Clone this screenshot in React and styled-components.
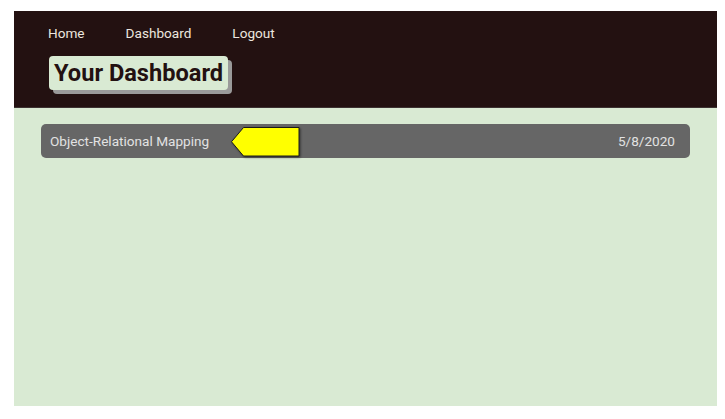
import styled, { createGlobalStyle } from "styled-components";

const GlobalStyle = createGlobalStyle`
  html, body {
    margin: 0;
    padding: 0;
    background: #ffffff;
    font-family: Roboto, "Liberation Sans", sans-serif;
  }
`;

const Page = styled.div`
  margin: 11px 8px 0 14px;
  height: 395px;
  background-color: #d9ead3;
  display: flex;
  flex-direction: column;
`;

const Header = styled.header`
  background-color: #231111;
  height: 97px;
  box-sizing: border-box;
  padding: 14px 0 0 34px;
  border-bottom: 1px solid #3d3232;
  display: flex;
  flex-direction: column;
  align-items: flex-start;
`;

const Nav = styled.nav`
  display: flex;
  gap: 41px;
`;

const NavLink = styled.a`
  color: #ece6df;
  font-size: 13.6px;
  line-height: 17px;
  text-decoration: none;
  cursor: pointer;
`;

const Title = styled.h1`
  margin: 14px 0 0 1px;
  padding: 3px 5px 3px 5px;
  background-color: #d9ead3;
  color: #231111;
  font-size: 23.6px;
  line-height: 28px;
  font-weight: 700;
  border-radius: 4px;
  box-shadow: 4px 4px 0 #9a9a9a;
`;

const List = styled.main`
  padding: 16px 27px;
  display: flex;
  flex-direction: column;
  gap: 8px;
`;

const Row = styled.div`
  height: 34px;
  background-color: #666666;
  border-radius: 5px;
  display: flex;
  align-items: center;
  padding: 0 15px 0 9px;
  color: #e2e2e2;
  font-size: 13.6px;
`;

const RowTitle = styled.span``;

const Marker = styled.svg`
  margin-left: 22px;
  margin-top: 1px;
  filter: drop-shadow(1px 1px 1px rgba(0, 0, 0, 0.5));
`;

const RowDate = styled.span`
  margin-left: auto;
`;

const Flag = () => (
  <Marker width="69" height="30" viewBox="0 0 69 30">
    <polygon
      points="12.5,0.5 68,0.5 68,29 12.5,29 0.5,14.75"
      fill="#ffff00"
      stroke="#1a1a1a"
      strokeWidth="1"
    />
  </Marker>
);

const App = () => {
  const entries = [{ title: "Object-Relational Mapping", date: "5/8/2020", flagged: true }];
  return (
    <>
      <GlobalStyle />
      <Page>
        <Header>
          <Nav>
            <NavLink>Home</NavLink>
            <NavLink>Dashboard</NavLink>
            <NavLink>Logout</NavLink>
          </Nav>
          <Title>Your Dashboard</Title>
        </Header>
        <List>
          {entries.map((e) => (
            <Row key={e.title}>
              <RowTitle>{e.title}</RowTitle>
              {e.flagged && <Flag />}
              <RowDate>{e.date}</RowDate>
            </Row>
          ))}
        </List>
      </Page>
    </>
  );
};

export default App;
